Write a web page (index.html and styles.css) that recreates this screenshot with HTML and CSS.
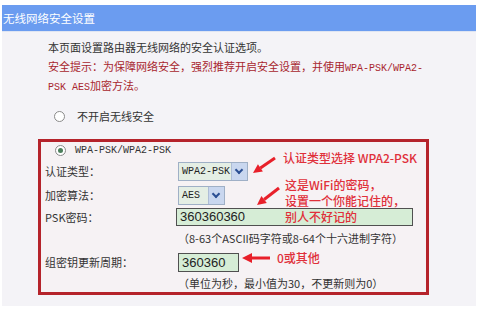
FILE: index.html
```html
<!DOCTYPE html>
<html lang="zh-CN">
<head>
  <meta charset="UTF-8">
  <meta name="viewport" content="width=device-width, initial-scale=1.0">
  <title>无线网络安全设置</title>
  <link rel="stylesheet" href="styles.css">
</head>
<body>
  <div class="page">
    <div class="title-bar">无线网络安全设置</div>

    <div class="intro">
      <div class="line">本页面设置路由器无线网络的安全认证选项。</div>
      <div class="line tip">安全提示：为保障网络安全，强烈推荐开启安全设置，并使用<span class="en">WPA-PSK/WPA2-</span></div>
      <div class="line tip"><span class="en">PSK AES</span>加密方法。</div>
    </div>

    <div class="option">
      <span class="radio"></span>
      <span>不开启无线安全</span>
    </div>

    <div class="wpa-box">
      <div class="option inner">
        <span class="radio checked"></span>
        <span class="en">WPA-PSK/WPA2-PSK</span>
      </div>

      <div class="form">
        <div class="label r1">认证类型：</div>
        <div class="field r1">
          <div class="select wide"><span class="en">WPA2-PSK</span><span class="drop"></span></div>
        </div>

        <div class="label r2">加密算法：</div>
        <div class="field r2">
          <div class="select narrow"><span class="en">AES</span><span class="drop"></span></div>
        </div>

        <div class="label r3">PSK密码：</div>
        <div class="field r3">
          <div class="text-input psk">360360360</div>
        </div>

        <div class="label hint-row"></div>
        <div class="field hint-row hint">（8-63个ASCII码字符或8-64个十六进制字符）</div>

        <div class="label r4">组密钥更新周期：</div>
        <div class="field r4">
          <div class="text-input period">360360</div>
        </div>

        <div class="label hint-row last"></div>
        <div class="field hint-row last hint">（单位为秒，最小值为30，不更新则为0）</div>
      </div>

      <!-- annotations drawn over the form -->
      <div class="note note-type">认证类型选择 WPA2-PSK</div>
      <svg class="arrow arrow-type" width="24" height="18" viewBox="0 0 24 18">
        <line x1="23" y1="2" x2="8.4" y2="11.9" stroke="#e8202a" stroke-width="3"/>
        <polygon points="1,17 10.9,15.6 5.9,8.2" fill="#e8202a"/>
      </svg>

      <div class="note note-psk">
        <div>这是WiFi的密码，</div>
        <div>设置一个你能记住的，</div>
        <div>别人不好记的</div>
      </div>
      <svg class="arrow arrow-psk" width="24" height="20" viewBox="0 0 24 20">
        <line x1="23" y1="2" x2="8.1" y2="13.5" stroke="#e8202a" stroke-width="3"/>
        <polygon points="1,19 10.8,17.1 5.4,9.9" fill="#e8202a"/>
      </svg>

      <div class="note note-period">0或其他</div>
      <svg class="arrow arrow-period" width="28" height="12" viewBox="0 0 28 12">
        <line x1="9" y1="6" x2="28" y2="6" stroke="#e8202a" stroke-width="3"/>
        <polygon points="0,6 10,1 10,11" fill="#e8202a"/>
      </svg>
    </div>
  </div>
</body>
</html>
```

FILE: styles.css
```css
body {
  margin: 0;
  background-color: #ffffff;
  font-family: "Noto Sans CJK SC", "Noto Sans", sans-serif;
  font-size: 11px;
  color: #333;
}
.page {
  margin: 5px 5px 0 2px;
  height: 301px;
  background-color: #f4f3f7;
  overflow: hidden;
}
.title-bar {
  height: 26px;
  line-height: 26px;
  padding-left: 1px;
  background-color: #6b9cf0;
  border-bottom: 1px solid #dfe5f2;
  color: #ffffff;
  font-size: 11.5px;
}
.en {
  font-family: "Liberation Mono", monospace;
  font-size: 10px;
}
.intro {
  margin-top: 6px;
  padding-left: 46px;
}
.line {
  height: 19px;
  line-height: 19px;
  white-space: nowrap;
}
.tip {
  color: #a8262e;
}
.option {
  display: flex;
  align-items: center;
  gap: 12px;
  height: 18px;
  margin-top: 12px;
  padding-left: 52px;
}
.radio {
  width: 9px;
  height: 9px;
  border: 1px solid #8a8a8a;
  border-radius: 50%;
  background-color: #ffffff;
  position: relative;
}
.radio.checked::after {
  content: "";
  position: absolute;
  left: 2px;
  top: 2px;
  width: 5px;
  height: 5px;
  border-radius: 50%;
  background-color: #4d7f5c;
}
.wpa-box {
  position: relative;
  margin: 14px 0 0 36px;
  width: 385px;
  height: 150px;
  border: 3px solid #b5232b;
  background-color: #f6f2f4;
}
.option.inner {
  margin-top: 0;
  height: 16px;
  padding-left: 14px;
  gap: 9px;
}
.form {
  display: grid;
  grid-template-columns: 133px 1fr;
  padding-left: 4px;
}
.label, .field {
  display: flex;
  align-items: center;
  white-space: nowrap;
}
.r1 { height: 26px; }
.r2 { height: 22px; }
.r3 { height: 22px; }
.r4 { height: 24px; margin-top: 2px; }
.hint-row { height: 20px; }
.hint-row.last { height: 18px; }
.select {
  display: flex;
  height: 17px;
  border: 1px solid #9fb0c6;
  background-color: #e4eee4;
}
.select.wide { width: 68px; }
.select.narrow { width: 45px; }
.select .en {
  flex: 1;
  padding-left: 3px;
  line-height: 17px;
  color: #222;
}
.drop {
  width: 15px;
  background-color: #c9d7ef;
  border-left: 1px solid #aebdd6;
  position: relative;
}
.drop::after {
  content: "";
  position: absolute;
  left: 4px;
  top: 4px;
  width: 4px;
  height: 4px;
  border-right: 2px solid #2b4f93;
  border-bottom: 2px solid #2b4f93;
  transform: rotate(45deg);
}
.text-input {
  height: 16px;
  line-height: 16px;
  border: 1px solid #505050;
  background-color: #d6edd6;
  padding-left: 3px;
  font-family: "Liberation Sans", sans-serif;
  font-size: 13px;
  color: #222;
}
.text-input.psk {
  width: 232px;
  margin-left: -2px;
}
.text-input.period {
  width: 56px;
  height: 17px;
  line-height: 17px;
}
.hint {
  color: #333;
}
.note {
  position: absolute;
  color: #e0303a;
  font-size: 12px;
  font-weight: 500;
  line-height: 16px;
  white-space: nowrap;
}
.note-type { left: 242px; top: 8px; }
.note-psk { left: 244px; top: 35px; }
.note-period { left: 236px; top: 108px; }
.arrow {
  position: absolute;
}
.arrow-type { left: 211px; top: 14px; }
.arrow-psk { left: 215px; top: 44px; }
.arrow-period { left: 201px; top: 110px; }
```
